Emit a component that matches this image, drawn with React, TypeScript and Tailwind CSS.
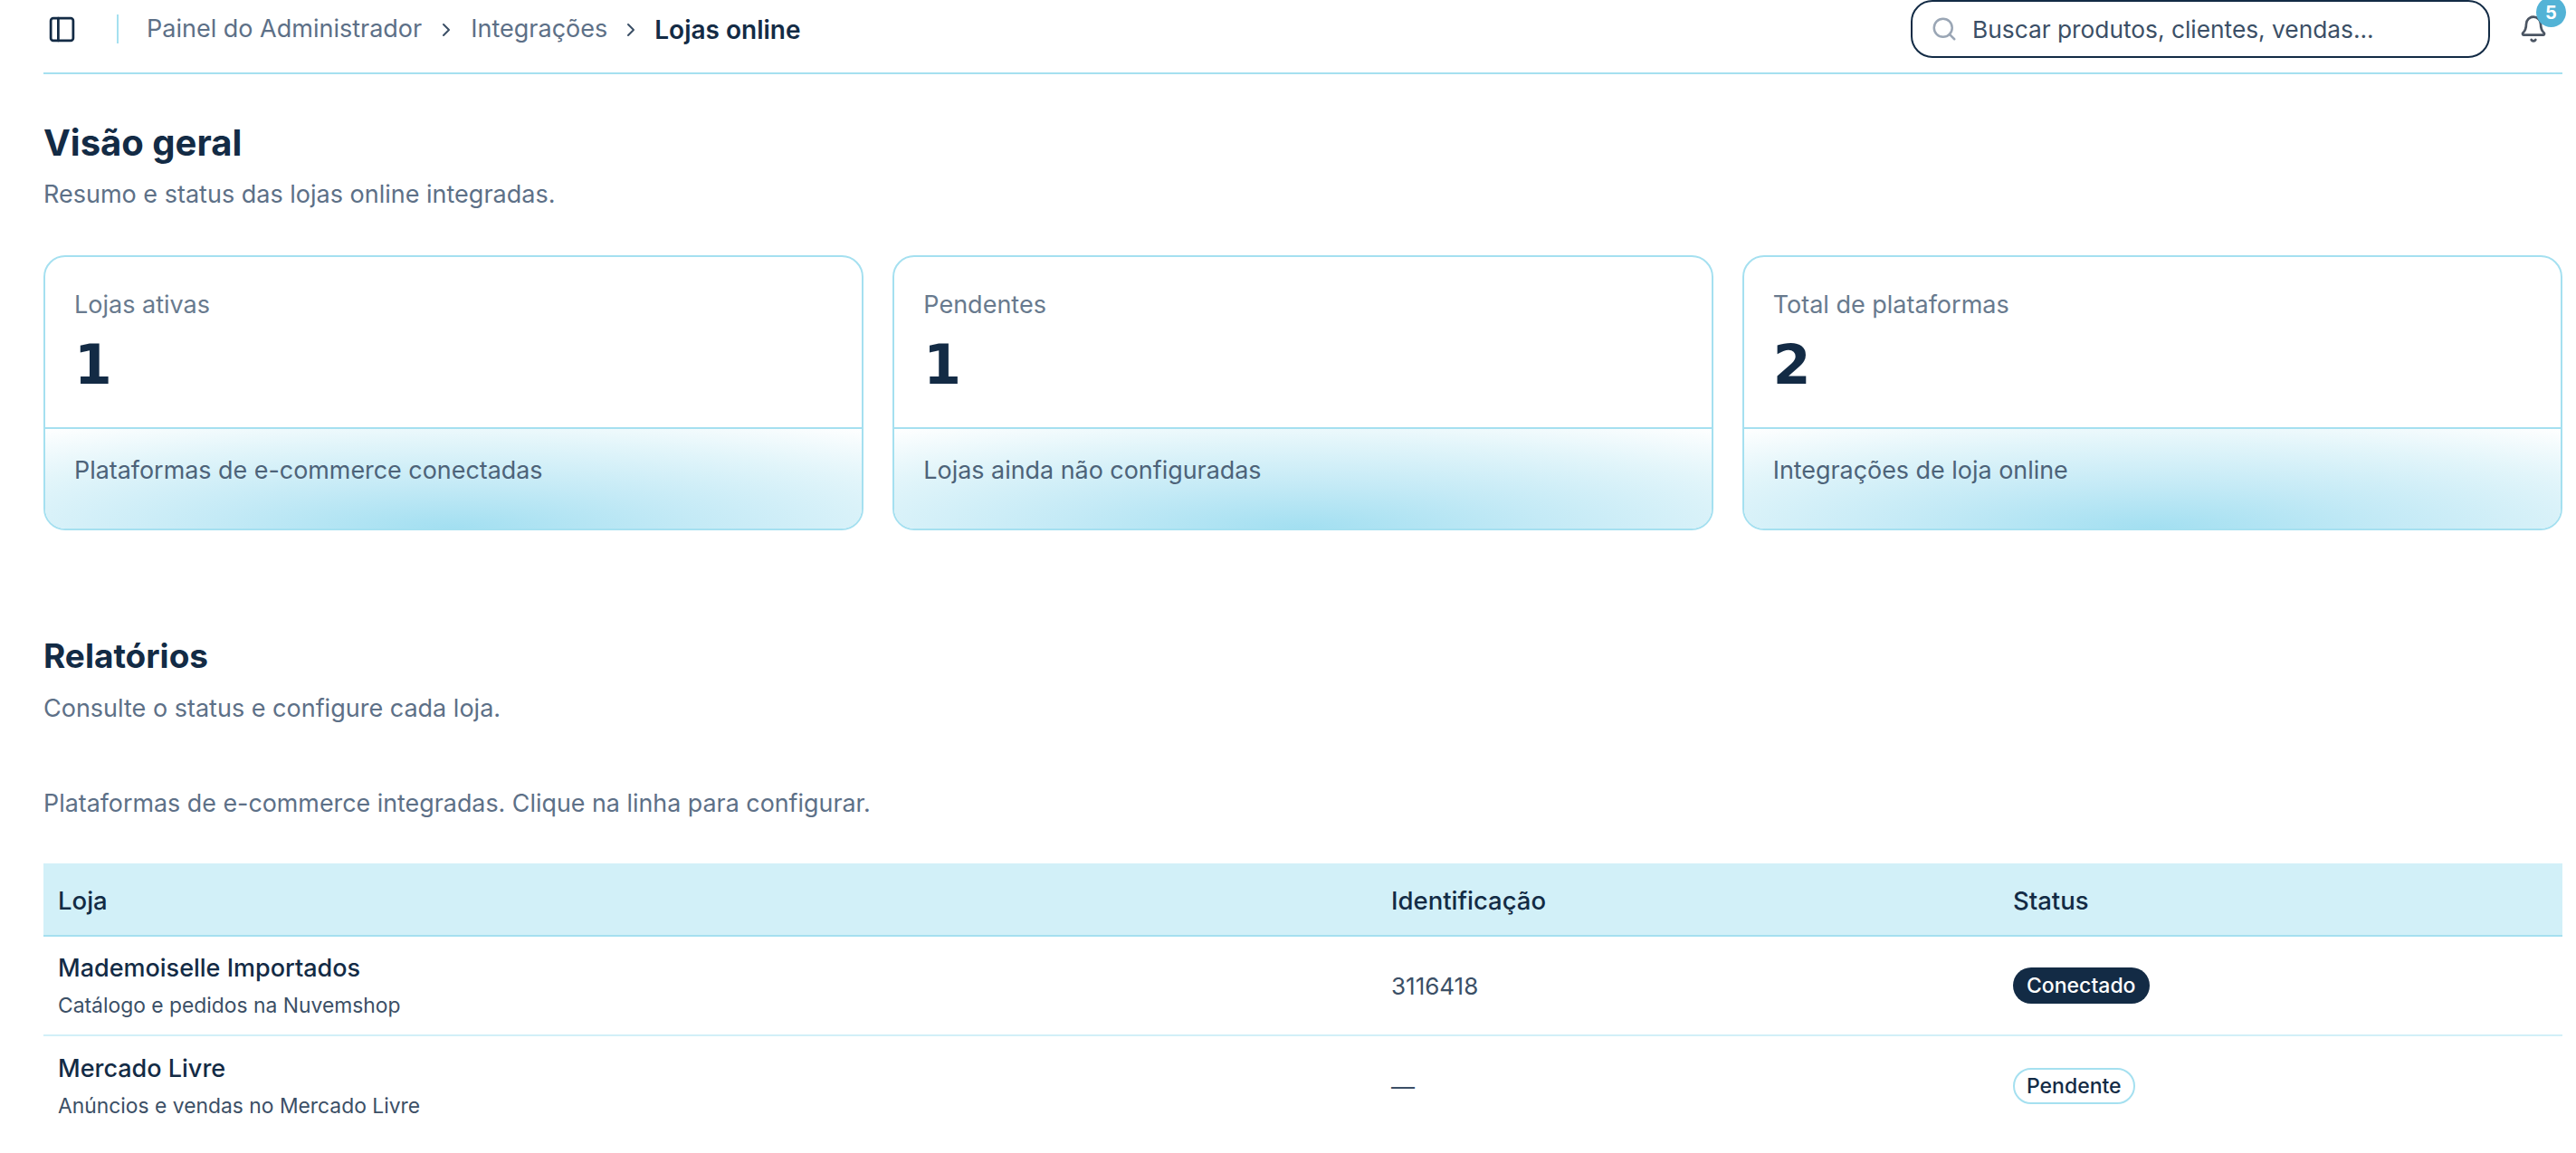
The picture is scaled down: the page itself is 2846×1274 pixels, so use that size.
import { Bell, ChevronRight, PanelLeft, Search } from 'lucide-react';

const cards = [
  { label: 'Lojas ativas', value: '1', note: 'Plataformas de e-commerce conectadas' },
  { label: 'Pendentes', value: '1', note: 'Lojas ainda não configuradas' },
  { label: 'Total de plataformas', value: '2', note: 'Integrações de loja online' },
];

function StatCard({ label, value, note }: { label: string; value: string; note: string }) {
  return (
    <div className="flex h-[304px] flex-col overflow-hidden rounded-[24px] border-2 border-[#a5e0f0] bg-white">
      <div className="h-[190px] border-b-2 border-[#a5e0f0] px-[32px] pt-[35px]">
        <p className="text-[27px] leading-[36px] text-[#687a8e]">{label}</p>
        <p className="mt-[13px] font-['DejaVu_Sans'] text-[60px] leading-[70px] font-bold text-[#132b45]">{value}</p>
      </div>
      <div className="flex-1 bg-[radial-gradient(ellipse_85%_125%_at_50%_100%,#a2dff1_0%,#c4eaf6_35%,#e2f5fa_70%,#ffffff_100%)] px-[32px] pt-[27px]">
        <p className="text-[26.9px] leading-[36px] text-[#4d6379]">{note}</p>
      </div>
    </div>
  );
}

function Row({ name, desc, id, children }: { name: string; desc: string; id: string; children: React.ReactNode }) {
  return (
    <div className="grid h-[110px] grid-cols-[1473px_688px_1fr] items-center border-b-2 border-[#d2f0f8] last:border-b-0">
      <div className="pt-[1px] pl-[16px]">
        <p className="text-[27px] leading-[36px] font-medium text-[#132b45]">{name}</p>
        <p className="mt-[7px] text-[22.85px] leading-[32px] text-[#3b4f66]">{desc}</p>
      </div>
      <p className="pl-[16px] text-[26px] text-[#3b4f66]">{id}</p>
      <div className="pl-[15px]">{children}</div>
    </div>
  );
}

export default function App() {
  return (
    <div className="h-[1274px] overflow-hidden bg-white pr-[15px] pl-[48px] font-['Inter'] text-[#132b45]">
      <header className="flex h-[82px] items-center border-b-2 border-[#a5e0f0] pb-[16px]">
        <PanelLeft size={33} className="ml-[4px] text-[#132b45]" />
        <div className="mr-[31px] ml-[44px] h-[32px] w-[2px] bg-[#a5e0f0]" />
        <nav className="flex items-center pt-[1px] text-[27px] text-[#5d7087]">
          <span>Painel do Administrador</span>
          <ChevronRight size={24} className="mx-[15px] text-[#3b4f66]" />
          <span>Integrações</span>
          <ChevronRight size={24} className="mx-[14px] text-[#3b4f66]" />
          <span className="text-[28px] font-semibold text-[#132b45]">Lojas online</span>
        </nav>
        <div className="ml-auto flex items-center">
          <div className="flex h-[64px] w-[640px] items-center rounded-[24px] border-2 border-[#132b45] pl-[20px]">
            <Search size={30} className="text-[#9aa6b5]" />
            <span className="ml-[16px] pt-[1px] text-[26.3px] text-[#3b4f66]">Buscar produtos, clientes, vendas...</span>
          </div>
          <div className="relative mr-[16px] ml-[32px]">
            <Bell size={32} className="text-[#4b5563]" />
            <span className="absolute top-[-19px] right-[-20px] flex h-[33px] w-[33px] items-center justify-center rounded-full bg-[#53b3d6] text-[20px] font-bold text-white">5</span>
          </div>
        </div>
      </header>

      <section className="pt-[50px]">
        <h1 className="text-[40px] leading-[52px] font-bold">Visão geral</h1>
        <p className="mt-[13px] text-[27px] leading-[36px] text-[#5d7087]">Resumo e status das lojas online integradas.</p>
        <div className="mt-[49px] grid grid-cols-3 gap-[32px]">
          {cards.map((c) => (
            <StatCard key={c.label} {...c} />
          ))}
        </div>
      </section>

      <section className="pt-[116px]">
        <h2 className="text-[37px] leading-[46px] font-bold">Relatórios</h2>
        <p className="mt-[17px] text-[27px] leading-[36px] text-[#5d7087]">Consulte o status e configure cada loja.</p>
        <p className="mt-[68px] text-[26.85px] leading-[36px] text-[#5d7087]">Plataformas de e-commerce integradas. Clique na linha para configurar.</p>
        <div className="mt-[49px]">
          <div className="grid h-[81px] grid-cols-[1473px_688px_1fr] items-center border-b-2 border-[#a5e0f0] bg-[#d2f0f8] pt-[4px] text-[27.5px] font-medium">
            <span className="pl-[16px]">Loja</span>
            <span className="pl-[16px]">Identificação</span>
            <span className="pl-[15px]">Status</span>
          </div>
          <Row name="Mademoiselle Importados" desc="Catálogo e pedidos na Nuvemshop" id="3116418">
            <span className="inline-flex h-[40px] items-center rounded-full bg-[#132b45] px-[15px] text-[23px] font-medium text-white">Conectado</span>
          </Row>
          <Row name="Mercado Livre" desc="Anúncios e vendas no Mercado Livre" id="—">
            <span className="inline-flex h-[40px] items-center rounded-full border-2 border-[#a5e0f0] bg-white px-[13px] text-[23px] font-medium text-[#132b45]">Pendente</span>
          </Row>
        </div>
      </section>
    </div>
  );
}
